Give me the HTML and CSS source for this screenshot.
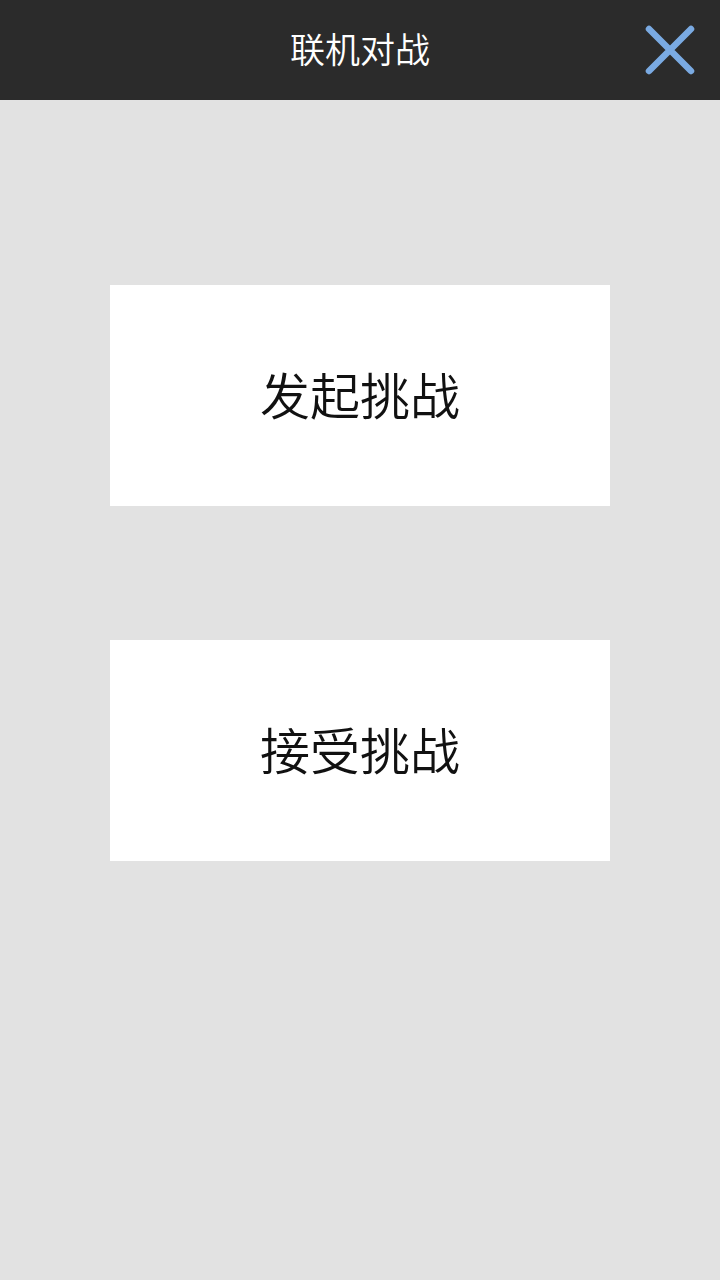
FILE: index.html
```html
<!DOCTYPE html>
<html lang="zh-CN">
<head>
<meta charset="utf-8">
<title>联机对战</title>
<link rel="stylesheet" href="styles.css">
</head>
<body>
<div class="app">
  <header class="topbar">
    <h1 class="title">联机对战</h1>
    <button class="close" aria-label="关闭">
      <svg viewBox="0 0 50 50" width="50" height="50">
        <path d="M4 4 L46 46 M46 4 L4 46" stroke="#7aaae2" stroke-width="6.5" stroke-linecap="round" fill="none"/>
      </svg>
    </button>
  </header>
  <main class="menu">
    <button class="card">发起挑战</button>
    <button class="card">接受挑战</button>
  </main>
</div>
</body>
</html>
```
FILE: styles.css
```css
html, body {
  margin: 0;
  padding: 0;
  height: 100%;
  background: #e2e2e2;
  font-family: "Noto Sans CJK SC", "Noto Sans", sans-serif;
}
.app {
  min-height: 100%;
  display: flex;
  flex-direction: column;
}
.topbar {
  height: 100px;
  background: #2b2b2b;
  display: flex;
  align-items: center;
  justify-content: center;
  position: relative;
}
.title {
  margin: 0;
  padding-bottom: 6px;
  color: #ffffff;
  font-size: 35px;
  font-weight: 350;
  line-height: 1;
}
.close {
  position: absolute;
  right: 25px;
  top: 25px;
  width: 50px;
  height: 50px;
  padding: 0;
  border: 0;
  background: transparent;
  display: flex;
}
.menu {
  display: flex;
  flex-direction: column;
  align-items: center;
  gap: 134px;
  padding-top: 185px;
}
.card {
  width: 500px;
  height: 221px;
  border: 0;
  background: #ffffff;
  color: #111111;
  font-family: "Noto Sans CJK SC", "Noto Sans", sans-serif;
  font-size: 50px;
  font-weight: 350;
  padding: 0 0 6px 0;
  display: flex;
  align-items: center;
  justify-content: center;
}
```
